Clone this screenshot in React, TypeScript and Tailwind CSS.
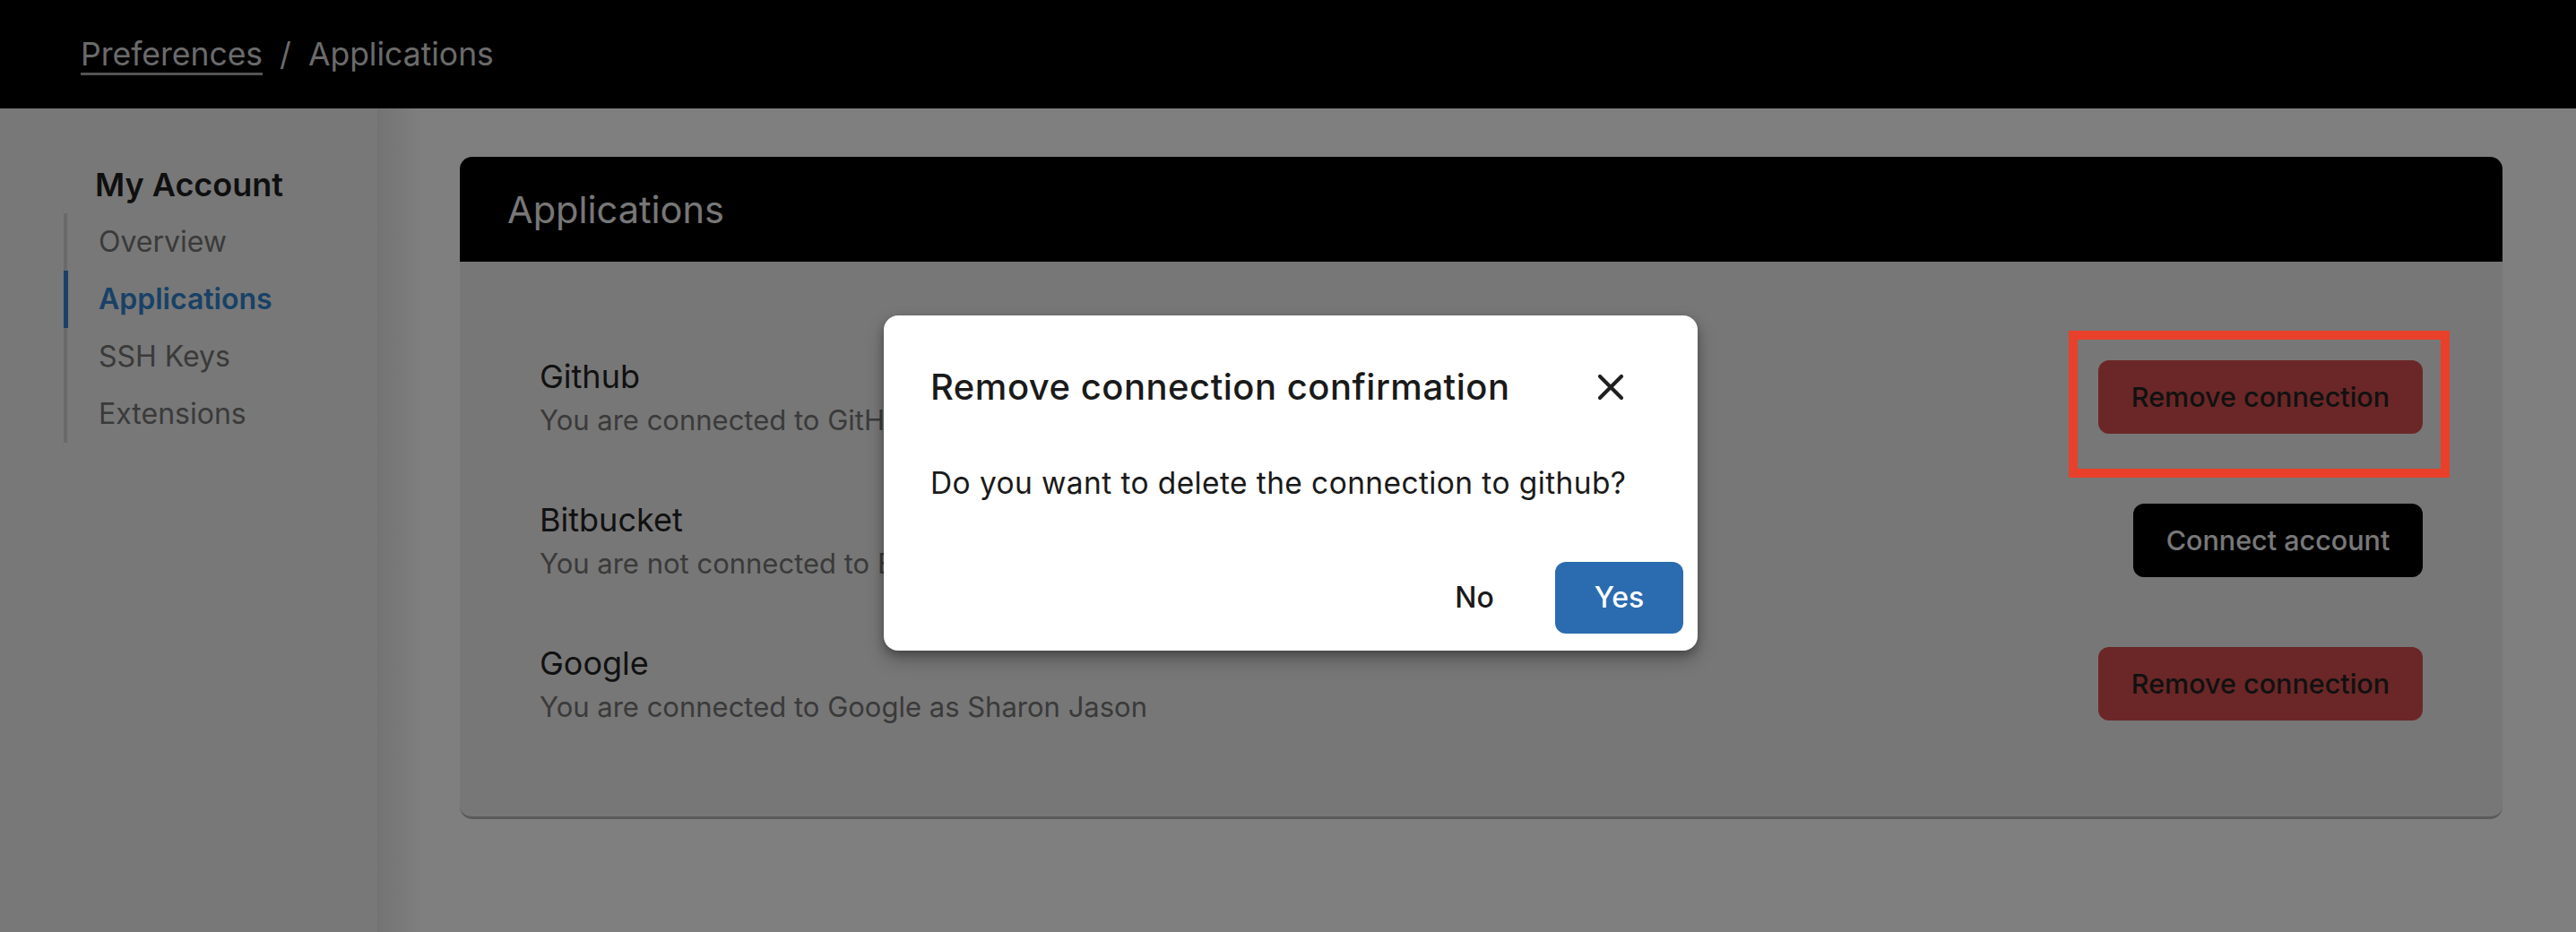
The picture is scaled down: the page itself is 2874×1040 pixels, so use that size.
import { useState } from "react"

type Connection = {
  name: string
  status: string
  connected: boolean
}

const connections: Connection[] = [
  {
    name: "Github",
    status: "You are connected to GitHub as Sharon Jason",
    connected: true,
  },
  {
    name: "Bitbucket",
    status: "You are not connected to Bitbucket",
    connected: false,
  },
  {
    name: "Google",
    status: "You are connected to Google as Sharon Jason",
    connected: true,
  },
]

const navItems = ["Overview", "Applications", "SSH Keys", "Extensions"]

const CloseIcon = () => (
  <svg width="30" height="30" viewBox="0 0 30 30" fill="none">
    <path
      d="M3 3 L27 27 M27 3 L3 27"
      stroke="#1f1f1f"
      strokeWidth="4.2"
      strokeLinecap="round"
    />
  </svg>
)

const App = () => {
  const [isOpen, setIsOpen] = useState(true)
  const active = "Applications"

  return (
    <div className="relative h-[1040px] w-full overflow-hidden bg-white font-['Inter',sans-serif]">
      {/* top bar */}
      <header className="flex h-[121px] items-center gap-[19px] bg-black px-[90px] text-[35.5px] leading-[54px] text-[#d6d6d6]">
        <a
          href="#"
          className="underline decoration-[#a8a8a8] decoration-[3px] underline-offset-[8px]"
        >
          Preferences
        </a>
        <span>/</span>
        <span>Applications</span>
      </header>

      <div className="flex h-[919px]">
        {/* sidebar */}
        <aside className="h-full w-[423px] shrink-0 border-r-[2px] border-[#e4e4e4] bg-[#f0f0f0] pl-[71px] pt-[61px]">
          <h2 className="ml-[35px] text-[36px] font-semibold leading-[48px] text-[#1f1f1f]">
            My Account
          </h2>
          <nav className="mt-[8px] flex flex-col">
            {navItems.map((item) => (
              <a
                key={item}
                href="#"
                className={
                  item === active
                    ? "border-l-[5px] border-[#3182ce] pl-[34px] text-[32px] font-semibold leading-[64px] text-[#3182ce]"
                    : "border-l-[4px] border-[#d4d4d4] pl-[35px] text-[32px] leading-[64px] text-[#757575]"
                }
              >
                {item}
              </a>
            ))}
          </nav>
        </aside>

        {/* main */}
        <main className="flex-1 bg-gradient-to-r from-[#e8e8e8] from-0% to-white to-[2%] pl-[90px] pr-[82px] pt-[54px]">
          <section className="rounded-[14px] border-b-[3px] border-[#b4b4b4] bg-[#efefef]">
            <div className="flex h-[117px] items-center rounded-t-[14px] bg-black pl-[53px]">
              <h1 className="text-[41.5px] leading-[60px] text-[#eeeeee]">
                Applications
              </h1>
            </div>
            <div className="px-[89px] pb-[68px] pt-[71px]">
              {connections.map((c) => (
                <div
                  key={c.name}
                  className="flex h-[160px] items-center justify-between"
                >
                  <div className="pt-[5px]">
                    <div className="text-[36px] leading-[48px] text-[#222222]">
                      {c.name}
                    </div>
                    <div className="-mt-[1px] text-[31px] leading-[52px] text-[#757575]">
                      {c.status}
                    </div>
                  </div>
                  {c.connected ? (
                    <button className="flex h-[82px] w-[362px] items-center justify-center rounded-[12px] bg-[#d64f4f] text-[30.5px] font-medium text-[#222222]">
                      Remove connection
                    </button>
                  ) : (
                    <button className="flex h-[82px] w-[323px] items-center justify-center rounded-[12px] bg-black text-[30.5px] font-medium text-[#f0f0f0]">
                      Connect account
                    </button>
                  )}
                </div>
              ))}
            </div>
          </section>
        </main>
      </div>

      {/* dimmed overlay + confirmation dialog */}
      {isOpen && (
        <div className="absolute inset-0 bg-black/50 pl-[986px] pt-[352px]">
          <div className="w-[908px] rounded-[16px] bg-white shadow-[0_4px_10px_rgba(0,0,0,0.25),0_10px_20px_rgba(0,0,0,0.25)]">
            <div className="flex items-center justify-between pl-[52px] pr-[73px] pt-[50px]">
              <h3 className="text-[40px] font-medium leading-[60px] tracking-[0.5px] text-[#1a1a1a]">
                Remove connection confirmation
              </h3>
              <button
                className="flex h-[48px] w-[48px] items-center justify-center"
                onClick={() => {
                  setIsOpen(false)
                }}
              >
                <CloseIcon />
              </button>
            </div>
            <p className="mt-[53px] pl-[52px] text-[33.5px] leading-[48px] tracking-[0.4px] text-[#1a1a1a]">
              Do you want to delete the connection to github?
            </p>
            <div className="mt-[64px] flex justify-end gap-[40px] pb-[19px] pr-[16px]">
              <button
                className="flex h-[80px] w-[100px] items-center justify-center rounded-[12px] text-[32px] font-medium text-[#1a1a1a]"
                onClick={() => {
                  setIsOpen(false)
                }}
              >
                No
              </button>
              <button
                className="flex h-[80px] w-[143px] items-center justify-center rounded-[12px] bg-[#2b6cb0] text-[32px] font-medium text-white"
                onClick={() => {
                  setIsOpen(false)
                }}
              >
                Yes
              </button>
            </div>
          </div>
          {/* highlight marker around the first remove button */}
          <div className="pointer-events-none absolute left-[2308px] top-[369px] h-[164px] w-[425px] border-[10px] border-[#e8402a]" />
        </div>
      )}
    </div>
  )
}

export default App
